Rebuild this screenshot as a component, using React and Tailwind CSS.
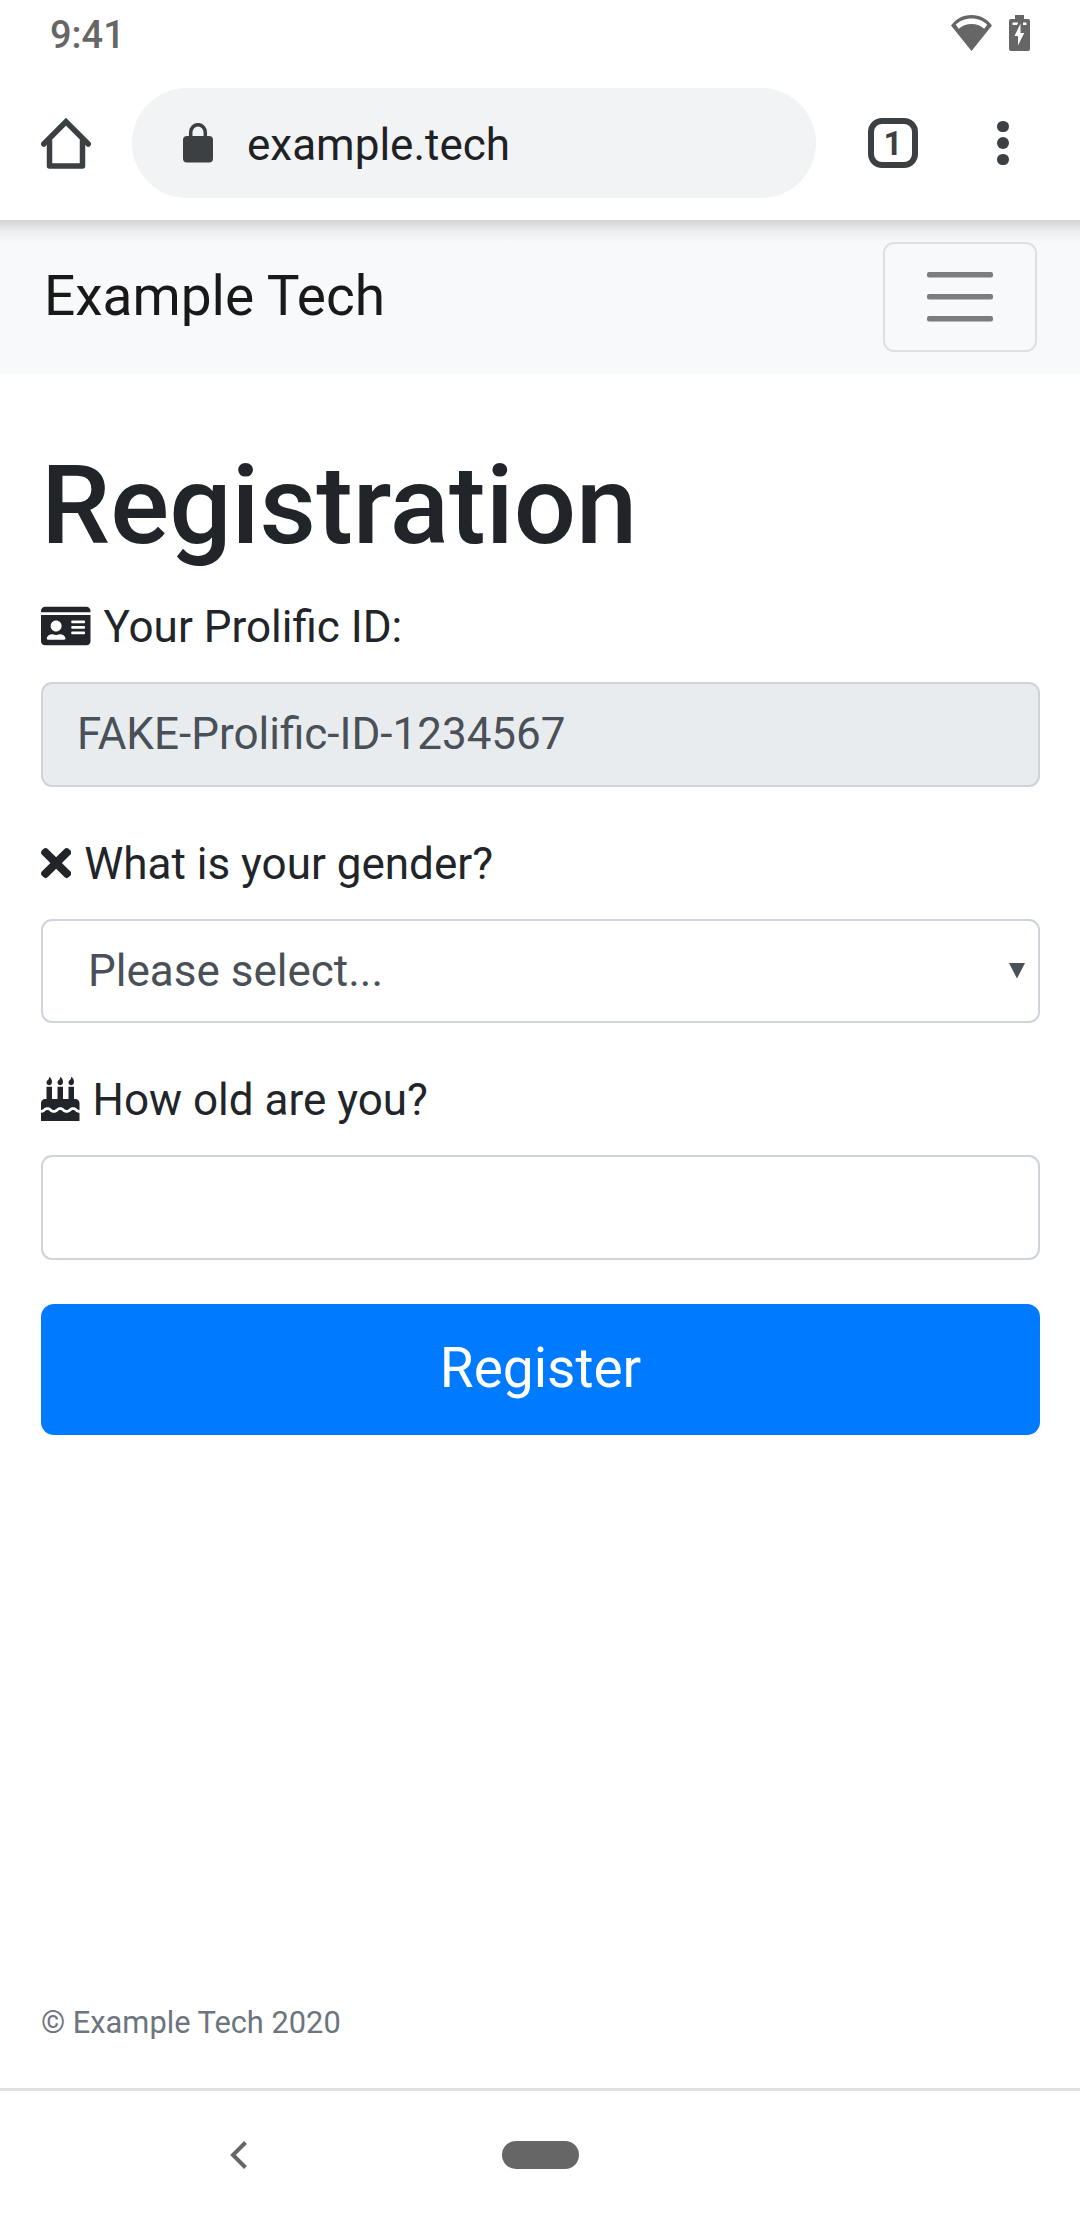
import React from "react";
import { FaIdCard, FaTimes, FaBirthdayCake } from "react-icons/fa";

function StatusBar() {
  return (
    <div className="flex h-[66px] items-start justify-between bg-white pl-[50px] pr-[50px] text-[#666666]">
      <span className="mt-3 text-[38px] font-medium leading-[46px]">9:41</span>
      <div className="mt-[15px] flex gap-[17px]">
        <svg width="41" height="36" viewBox="0 0 41 36" fill="currentColor">
          <path fillRule="evenodd" d="M0 10.500C5 4 12 0 20.500 0S36 4 41 10.500L20.500 36ZM4.800 9.800L7.800 13.700C11 11 15.500 9 20.500 9S30 11 33.200 13.700L36.200 9.800C32.500 6 27 3.600 20.500 3.600S8.500 6 4.800 9.800Z" />
        </svg>
        <svg width="21" height="36" viewBox="0 0 21 36" fill="currentColor">
          <path fillRule="evenodd" d="M6 0H15V4H19Q21 4 21 6V34Q21 36 19 36H2Q0 36 0 34V6Q0 4 2 4H6ZM11.500 8.500L5.500 21H9V30.500L15.200 18H11.500ZM3.500 7.500V10H8L9.200 7.500ZM14 7.500V10H17.500V7.500Z" />
        </svg>
      </div>
    </div>
  );
}

function Toolbar() {
  return (
    <div className="flex h-[154px] items-center bg-white pl-[41px] text-[#3c4043]">
      <svg width="50" height="51" viewBox="0 0 50 51" fill="none" stroke="currentColor" strokeWidth="5.500" strokeLinejoin="round" strokeLinecap="round">
        <path d="M2.750 26L25 3.700L47.250 26" strokeLinejoin="miter" />
        <path d="M8.500 22V48H41.500V22" />
      </svg>
      <div className="ml-[41px] flex h-[110px] w-[684px] items-center rounded-full bg-[#f1f3f4] pl-[51px]">
        <svg width="30" height="40" viewBox="0 0 30 40">
          <rect x="0" y="13" width="30" height="26.500" rx="4" fill="currentColor" />
          <path d="M7.700 15V9.500A7.300 7.800 0 0 1 22.300 9.500V15" fill="none" stroke="currentColor" strokeWidth="3.500" />
        </svg>
        <span className="ml-[34px] mt-[3px] text-[44px] leading-[52px] text-[#202124]">example.tech</span>
      </div>
      <div className="ml-[52px] flex h-[50px] w-[50px] items-center justify-center rounded-[14px] border-[6px] border-[#3c4043] text-[33px] font-bold leading-none">1</div>
      <div className="ml-[79px] flex flex-col gap-[5px]">
        <i className="h-[11.500px] w-[11.500px] rounded-full bg-[#3c4043]" />
        <i className="h-[11.500px] w-[11.500px] rounded-full bg-[#3c4043]" />
        <i className="h-[11.500px] w-[11.500px] rounded-full bg-[#3c4043]" />
      </div>
    </div>
  );
}

function Navbar() {
  return (
    <nav className="relative flex h-[154px] items-center justify-between bg-[#f8f9fb] pl-11 pr-[43px]">
      <div className="absolute inset-x-0 top-0 h-[22px] bg-gradient-to-b from-black/15 via-black/5 to-transparent" />
      <span className="mb-[3px] text-[55px] leading-[82px] text-[#19191a]">Example Tech</span>
      <button className="flex h-[110px] w-[154px] items-center justify-center rounded-[11px] border-2 border-black/10">
        <svg width="66" height="50" viewBox="0 0 66 50" fill="#7c7d7d">
          <rect x="0" y="0" width="66" height="5.500" rx="2" />
          <rect x="0" y="22" width="66" height="5.500" rx="2" />
          <rect x="0" y="44" width="66" height="5.500" rx="2" />
        </svg>
      </button>
    </nav>
  );
}

function Label({ icon: Icon, size, children }) {
  return (
    <label className="mb-[22px] flex h-[66px] items-center text-[44px] leading-[66px]">
      <Icon className={size} />
      <span className="ml-[13px]">{children}</span>
    </label>
  );
}

export default function App() {
  return (
    <div className="flex h-[2220px] w-[1080px] flex-col overflow-hidden bg-white font-['Roboto',sans-serif] text-[#212529]">
      <StatusBar />
      <Toolbar />
      <Navbar />
      <main className="flex grow flex-col pl-[41px] pr-10 pt-[66px]">
        <h1 className="mb-[22px] text-[110px] font-medium leading-[132px]">Registration</h1>
        <Label icon={FaIdCard} size="mb-[3px] h-11 w-[49.500px]">Your Prolific ID:</Label>
        <div className="mb-11 flex h-[105px] items-center rounded-[11px] border-2 border-[#ced4da] bg-[#e9ecef] pb-[1px] pl-[34px] text-[44px] text-[#495057]">
          FAKE-Prolific-ID-1234567
        </div>
        <Label icon={FaTimes} size="mb-[2px] h-11 w-[30.250px]">What is your gender?</Label>
        <div className="mb-11 flex h-[104px] items-center justify-between rounded-[11px] border-2 border-[#ced4da] pl-[45px] pr-[13px] text-[44px] text-[#495057]">
          <span>Please select...</span>
          <svg width="16" height="16" viewBox="0 0 16 16" fill="currentColor"><path d="M0 0H16L8 15.500Z" /></svg>
        </div>
        <Label icon={FaBirthdayCake} size="mb-[2px] h-11 w-[38.500px]">How old are you?</Label>
        <div className="h-[105px] rounded-[11px] border-2 border-[#ced4da]" />
        <button className="mt-11 h-[131px] rounded-[13px] bg-[#007bff] pb-[3px] text-[55px] leading-[82px] text-white">Register</button>
        <footer className="mb-[42px] mt-auto text-[30.800px] leading-[46px] text-[#6c757d]">© Example Tech 2020</footer>
      </main>
      <div className="flex h-[132px] items-center border-t-[3px] border-[#e0e0e0] pb-[2px] pl-[230px] text-[#666666]">
        <svg width="18" height="28" viewBox="0 0 18 28" fill="none" stroke="currentColor" strokeWidth="4"><path d="M15.500 1.500L3 14L15.500 26.500" /></svg>
        <div className="ml-[254px] h-7 w-[77px] rounded-full bg-[#666666]" />
      </div>
    </div>
  );
}
